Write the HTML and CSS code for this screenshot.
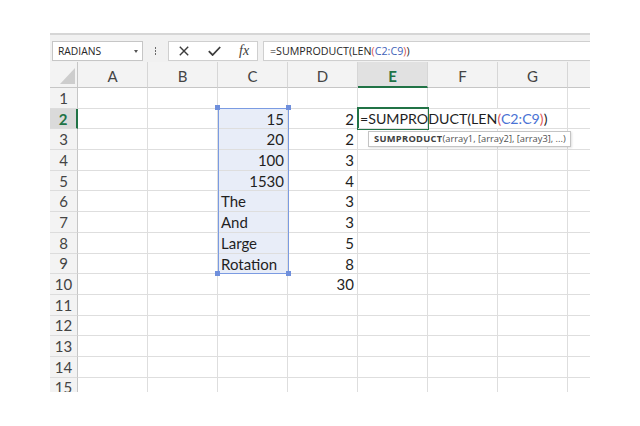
FILE: index.html
```html
<!DOCTYPE html>
<html>
<head>
<meta charset="utf-8">
<link rel="stylesheet" href="styles.css">
</head>
<body>
<div class="app">
  <div class="fbar">
    <div class="namebox"><span class="nbtext">RADIANS</span><span class="caret"></span></div>
    <div class="grip"><i></i><i></i><i></i></div>
    <div class="fnbox">
      <svg class="ico-x" width="10" height="10" viewBox="0 0 10 10"><path d="M0.8 0.8 L9.2 9.2 M9.2 0.8 L0.8 9.2" stroke="#3c3c3c" stroke-width="1.4" fill="none"/></svg>
      <svg class="ico-ok" width="13" height="10" viewBox="0 0 13 10"><path d="M0.8 5.2 L4.6 9 L12.2 1" stroke="#3c3c3c" stroke-width="1.8" fill="none"/></svg>
      <span class="fx">fx</span>
    </div>
    <div class="input">=SUMPRODUCT(LEN<span class="pr">(</span><span class="rf">C2:C9</span><span class="pr">)</span>)</div>
  </div>

  <div class="sheet">
    <div class="row head">
      <div class="corner"><span class="tri"></span></div>
      <div class="ch">A</div><div class="ch">B</div><div class="ch">C</div><div class="ch">D</div>
      <div class="ch on">E</div><div class="ch">F</div><div class="ch">G</div><div class="ch last"></div>
    </div>
    <div class="row"><div class="rh">1</div><div class="c"></div><div class="c"></div><div class="c"></div><div class="c"></div><div class="c"></div><div class="c"></div><div class="c"></div><div class="c last"></div></div>
    <div class="row"><div class="rh on">2</div><div class="c"></div><div class="c"></div><div class="c sel num">15</div><div class="c num">2</div><div class="c edit">=SUMPRODUCT(LEN<span class="pr">(</span><span class="rf">C2:C9</span><span class="pr">)</span>)</div><div class="c nob"></div><div class="c"></div><div class="c last"></div></div>
    <div class="row"><div class="rh">3</div><div class="c"></div><div class="c"></div><div class="c sel num">20</div><div class="c num">2</div><div class="c"></div><div class="c"></div><div class="c"></div><div class="c last"></div></div>
    <div class="row"><div class="rh">4</div><div class="c"></div><div class="c"></div><div class="c sel num">100</div><div class="c num">3</div><div class="c"></div><div class="c"></div><div class="c"></div><div class="c last"></div></div>
    <div class="row"><div class="rh">5</div><div class="c"></div><div class="c"></div><div class="c sel num">1530</div><div class="c num">4</div><div class="c"></div><div class="c"></div><div class="c"></div><div class="c last"></div></div>
    <div class="row"><div class="rh">6</div><div class="c"></div><div class="c"></div><div class="c sel">The</div><div class="c num">3</div><div class="c"></div><div class="c"></div><div class="c"></div><div class="c last"></div></div>
    <div class="row"><div class="rh">7</div><div class="c"></div><div class="c"></div><div class="c sel">And</div><div class="c num">3</div><div class="c"></div><div class="c"></div><div class="c"></div><div class="c last"></div></div>
    <div class="row"><div class="rh">8</div><div class="c"></div><div class="c"></div><div class="c sel">Large</div><div class="c num">5</div><div class="c"></div><div class="c"></div><div class="c"></div><div class="c last"></div></div>
    <div class="row"><div class="rh">9</div><div class="c"></div><div class="c"></div><div class="c sel">Rotation</div><div class="c num">8</div><div class="c"></div><div class="c"></div><div class="c"></div><div class="c last"></div></div>
    <div class="row"><div class="rh">10</div><div class="c"></div><div class="c"></div><div class="c"></div><div class="c num">30</div><div class="c"></div><div class="c"></div><div class="c"></div><div class="c last"></div></div>
    <div class="row"><div class="rh">11</div><div class="c"></div><div class="c"></div><div class="c"></div><div class="c"></div><div class="c"></div><div class="c"></div><div class="c"></div><div class="c last"></div></div>
    <div class="row"><div class="rh">12</div><div class="c"></div><div class="c"></div><div class="c"></div><div class="c"></div><div class="c"></div><div class="c"></div><div class="c"></div><div class="c last"></div></div>
    <div class="row"><div class="rh">13</div><div class="c"></div><div class="c"></div><div class="c"></div><div class="c"></div><div class="c"></div><div class="c"></div><div class="c"></div><div class="c last"></div></div>
    <div class="row"><div class="rh">14</div><div class="c"></div><div class="c"></div><div class="c"></div><div class="c"></div><div class="c"></div><div class="c"></div><div class="c"></div><div class="c last"></div></div>
    <div class="row"><div class="rh">15</div><div class="c"></div><div class="c"></div><div class="c"></div><div class="c"></div><div class="c"></div><div class="c"></div><div class="c"></div><div class="c last"></div></div>

    <div class="selbox"><i class="hd tl"></i><i class="hd tr"></i><i class="hd bl"></i><i class="hd br"></i></div>
    <div class="active"></div>
    <div class="tip"><b>SUMPRODUCT</b>(array1, [array2], [array3], ...)</div>
  </div>
</div>
</body>
</html>
```

FILE: styles.css
```css
* { box-sizing: border-box; }
html, body { margin: 0; padding: 0; background: #ffffff; }
body { width: 640px; height: 426px; overflow: hidden; }

.app {
  margin: 33px 0 0 50px;
  width: 540px;
}

/* formula bar */
.fbar {
  border-top: 2px solid #d6d6d6;
  background: #f1f1f1;
  height: 29px;
  padding: 6px 0 1px 2px;
  display: flex;
  align-items: stretch;
  font-family: "Open Sans", "Liberation Sans", sans-serif;
  color: #262626;
}
.namebox {
  width: 91px;
  height: 20px;
  background: #fff;
  border: 1px solid #c6c6c6;
  display: flex;
  align-items: center;
  justify-content: space-between;
  padding: 0 4px 0 5px;
  font-size: 10.3px;
}
.caret {
  width: 0; height: 0;
  border-left: 2.5px solid transparent;
  border-right: 2.5px solid transparent;
  border-top: 3px solid #555;
}
.grip {
  width: 25px;
  display: flex;
  flex-direction: column;
  align-items: center;
  justify-content: center;
  gap: 1.5px;
}
.grip i { display: block; width: 1.5px; height: 1.5px; background: #6a6a6a; }
.fnbox {
  width: 90px;
  height: 20px;
  background: #fff;
  border: 1px solid #cfcfcf;
  display: flex;
  align-items: center;
  padding-left: 10px;
}
.ico-x { margin-right: 19px; }
.ico-ok { margin-right: 18px; }
.fx {
  font-family: "Liberation Serif", "DejaVu Serif", serif;
  font-style: italic;
  font-size: 14px;
  color: #3c3c3c;
  line-height: 1;
}
.input {
  flex: 1;
  margin-left: 5px;
  height: 20px;
  background: #fff;
  border: 1px solid #cfcfcf;
  border-right: none;
  font-size: 10.7px;
  line-height: 18px;
  padding-left: 6px;
  white-space: nowrap;
}
.input .pr { color: #d9534f; }
.input .rf { color: #3f62b8; }

/* sheet */
.sheet {
  position: relative;
  height: 330px;
  overflow: hidden;
  font-family: "Lato", "Liberation Sans", sans-serif;
  font-size: 15px;
  color: #1f1f1f;
}
.row {
  display: flex;
  height: 20.7px;
}
.row.head { height: 26px; }

.corner, .ch {
  background: #f3f3f3;
  border-right: 1px solid #d6d6d6;
  border-bottom: 1px solid #c6c6c6;
  display: flex;
  align-items: center;
  justify-content: center;
  padding-top: 3px;
  color: #444;
}
.corner { width: 28px; position: relative; border-right-color: #c6c6c6; }
.tri {
  position: absolute;
  right: 2px;
  bottom: 3px;
  width: 0; height: 0;
  border-left: 15px solid transparent;
  border-bottom: 16px solid #cdcdcd;
}
.ch { width: 70px; }
.ch.last { flex: 1; width: auto; border-right: none; }
.ch.on {
  background: #e1e1e1;
  color: #217346;
  font-weight: 700;
  border-bottom: 2px solid #217346;
}
.rh {
  width: 28px;
  background: #f3f3f3;
  border-right: 1px solid #c6c6c6;
  border-bottom: 1px solid #dcdcdc;
  display: flex;
  align-items: center;
  justify-content: center;
  color: #444;
}
.rh.on {
  background: #dadada;
  color: #217346;
  font-weight: 700;
  border-right: 2px solid #217346;
}
.c {
  width: 70px;
  border-right: 1px solid #dedede;
  border-bottom: 1px solid #dedede;
  line-height: 20px;
  padding: 0 3px;
  white-space: nowrap;
}
.c.last { flex: 1; width: auto; border-right: none; }
.c.num { text-align: right; }
.c.sel { background: #e8edf8; }
.c.nob { border-right-color: transparent; }
.c.edit {
  position: relative;
  z-index: 2;
  overflow: visible;
  padding-left: 2px;
  font-size: 14.2px;
  color: #1f1f1f;
}
.edit .pr { color: #e05a5a; }
.edit .rf { color: #4a72d4; }

.selbox {
  position: absolute;
  left: 167.5px;
  top: 45.7px;
  width: 71px;
  height: 166px;
  border: 1.5px solid #7b9be2;
  z-index: 1;
}
.hd {
  position: absolute;
  width: 5px;
  height: 5px;
  background: #6f8fdc;
}
.hd.tl { left: -3.5px; top: -3.5px; }
.hd.tr { right: -3.5px; top: -3.5px; }
.hd.bl { left: -3.5px; bottom: -3.5px; }
.hd.br { right: -3.5px; bottom: -3.5px; }

.active {
  position: absolute;
  left: 307px;
  top: 45px;
  width: 72px;
  height: 22.5px;
  border: 2px solid #217346;
  z-index: 1;
}

.tip {
  position: absolute;
  left: 318px;
  top: 69px;
  height: 16px;
  padding: 0 4px 0 5px;
  background: #fff;
  border: 1px solid #c4c4c4;
  box-shadow: 1px 1px 2px rgba(0,0,0,0.12);
  font-family: "Open Sans", "Liberation Sans", sans-serif;
  font-size: 9.3px;
  line-height: 14px;
  color: #505050;
  white-space: nowrap;
  z-index: 3;
}
.tip b { color: #404040; font-weight: 700; letter-spacing: 0.3px; }
```
